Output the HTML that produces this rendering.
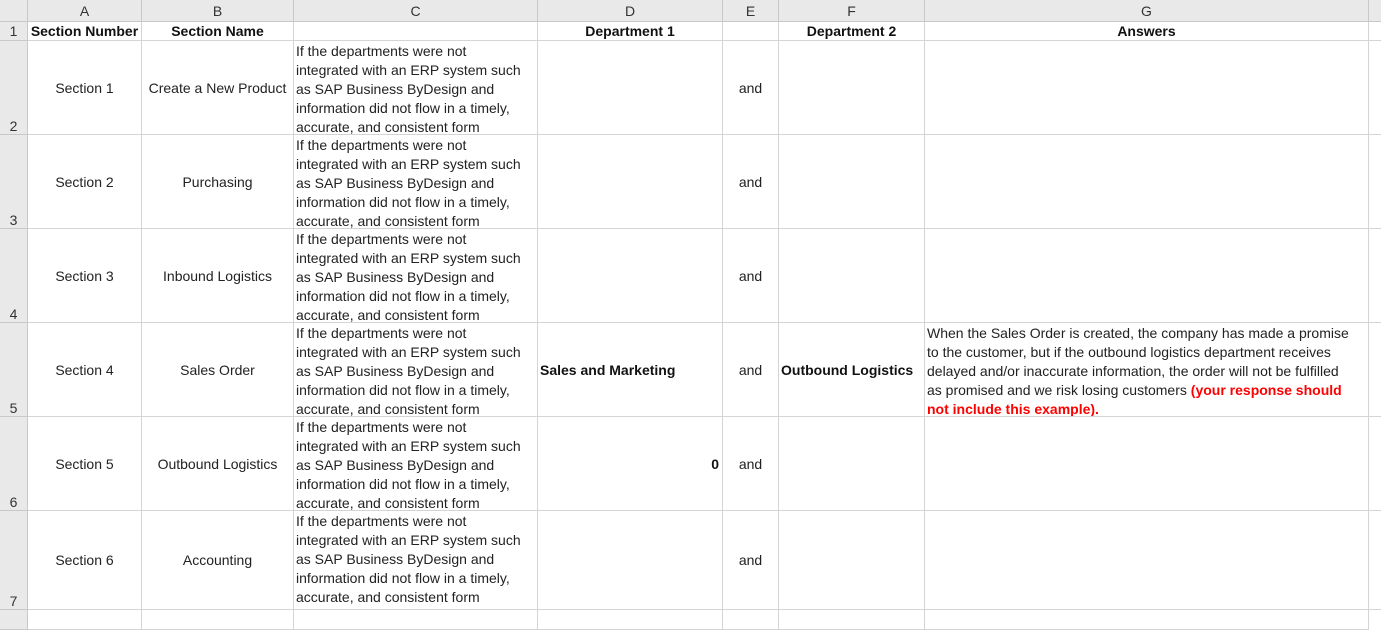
<!DOCTYPE html>
<html><head><meta charset="utf-8"><style>
body{margin:0;width:1381px;height:618px;overflow:hidden;background:#fff;font-family:"Liberation Sans","Noto Sans CJK SC",sans-serif;font-size:14px;color:#222;position:relative}
.c{position:absolute;box-sizing:border-box;border-right:1px solid #d4d4d4;border-bottom:1px solid #d4d4d4;overflow:hidden;display:flex;align-items:center;justify-content:center;white-space:nowrap}
.h{background:#e9e9e9;color:#333;border-color:#c8c8c8}
.rh{background:#e9e9e9;color:#333;border-color:#c8c8c8;align-items:flex-end;justify-content:center;font-size:14px}
.b{font-weight:bold;color:#111}
.w{display:block;line-height:19px;padding:1px 2px 0 2px}
.red{color:#f00;font-weight:bold}
</style></head><body>
<div class="c h" style="left:0;top:0;width:28px;height:22px"></div>
<div class="c h" style="left:28px;top:0;width:114px;height:22px">A</div>
<div class="c h" style="left:142px;top:0;width:152px;height:22px">B</div>
<div class="c h" style="left:294px;top:0;width:244px;height:22px">C</div>
<div class="c h" style="left:538px;top:0;width:185px;height:22px">D</div>
<div class="c h" style="left:723px;top:0;width:56px;height:22px">E</div>
<div class="c h" style="left:779px;top:0;width:146px;height:22px">F</div>
<div class="c h" style="left:925px;top:0;width:444px;height:22px">G</div>
<div class="c h" style="left:1369px;top:0;width:20px;height:22px"></div>

<div class="c rh" style="left:0;top:22px;width:28px;height:19px;align-items:center">1</div>
<div class="c b" style="left:28px;top:22px;width:114px;height:19px">Section Number</div>
<div class="c b" style="left:142px;top:22px;width:152px;height:19px">Section Name</div>
<div class="c" style="left:294px;top:22px;width:244px;height:19px"></div>
<div class="c b" style="left:538px;top:22px;width:185px;height:19px">Department 1</div>
<div class="c" style="left:723px;top:22px;width:56px;height:19px"></div>
<div class="c b" style="left:779px;top:22px;width:146px;height:19px">Department 2</div>
<div class="c b" style="left:925px;top:22px;width:444px;height:19px">Answers</div>
<div class="c" style="left:1369px;top:22px;width:20px;height:19px"></div>

<div class="c rh" style="left:0;top:41px;width:28px;height:94px">2</div>
<div class="c" style="left:28px;top:41px;width:114px;height:94px">Section 1</div>
<div class="c" style="left:142px;top:41px;width:152px;height:94px">Create a New Product</div>
<div class="c w" style="left:294px;top:41px;width:244px;height:94px">If the departments were not<br>integrated with an ERP system such<br>as SAP Business ByDesign and<br>information did not flow in a timely,<br>accurate, and consistent form</div>
<div class="c" style="left:538px;top:41px;width:185px;height:94px"></div>
<div class="c" style="left:723px;top:41px;width:56px;height:94px">and</div>
<div class="c" style="left:779px;top:41px;width:146px;height:94px"></div>
<div class="c" style="left:925px;top:41px;width:444px;height:94px"></div>
<div class="c" style="left:1369px;top:41px;width:20px;height:94px"></div>

<div class="c rh" style="left:0;top:135px;width:28px;height:94px">3</div>
<div class="c" style="left:28px;top:135px;width:114px;height:94px">Section 2</div>
<div class="c" style="left:142px;top:135px;width:152px;height:94px">Purchasing</div>
<div class="c w" style="left:294px;top:135px;width:244px;height:94px">If the departments were not<br>integrated with an ERP system such<br>as SAP Business ByDesign and<br>information did not flow in a timely,<br>accurate, and consistent form</div>
<div class="c" style="left:538px;top:135px;width:185px;height:94px"></div>
<div class="c" style="left:723px;top:135px;width:56px;height:94px">and</div>
<div class="c" style="left:779px;top:135px;width:146px;height:94px"></div>
<div class="c" style="left:925px;top:135px;width:444px;height:94px"></div>
<div class="c" style="left:1369px;top:135px;width:20px;height:94px"></div>

<div class="c rh" style="left:0;top:229px;width:28px;height:94px">4</div>
<div class="c" style="left:28px;top:229px;width:114px;height:94px">Section 3</div>
<div class="c" style="left:142px;top:229px;width:152px;height:94px">Inbound Logistics</div>
<div class="c w" style="left:294px;top:229px;width:244px;height:94px">If the departments were not<br>integrated with an ERP system such<br>as SAP Business ByDesign and<br>information did not flow in a timely,<br>accurate, and consistent form</div>
<div class="c" style="left:538px;top:229px;width:185px;height:94px"></div>
<div class="c" style="left:723px;top:229px;width:56px;height:94px">and</div>
<div class="c" style="left:779px;top:229px;width:146px;height:94px"></div>
<div class="c" style="left:925px;top:229px;width:444px;height:94px"></div>
<div class="c" style="left:1369px;top:229px;width:20px;height:94px"></div>

<div class="c rh" style="left:0;top:323px;width:28px;height:94px">5</div>
<div class="c" style="left:28px;top:323px;width:114px;height:94px">Section 4</div>
<div class="c" style="left:142px;top:323px;width:152px;height:94px">Sales Order</div>
<div class="c w" style="left:294px;top:323px;width:244px;height:94px">If the departments were not<br>integrated with an ERP system such<br>as SAP Business ByDesign and<br>information did not flow in a timely,<br>accurate, and consistent form</div>
<div class="c b" style="left:538px;top:323px;width:185px;height:94px;justify-content:flex-start;padding-left:2px">Sales and Marketing</div>
<div class="c" style="left:723px;top:323px;width:56px;height:94px">and</div>
<div class="c b" style="left:779px;top:323px;width:146px;height:94px;justify-content:flex-start;padding-left:2px">Outbound Logistics</div>
<div class="c w" style="left:925px;top:323px;width:444px;height:94px">When the Sales Order is created, the company has made a promise<br>to the customer, but if the outbound logistics department receives<br>delayed and/or inaccurate information, the order will not be fulfilled<br>as promised and we risk losing customers <span class="red">(your response should<br>not include this example).</span></div>
<div class="c" style="left:1369px;top:323px;width:20px;height:94px"></div>

<div class="c rh" style="left:0;top:417px;width:28px;height:94px">6</div>
<div class="c" style="left:28px;top:417px;width:114px;height:94px">Section 5</div>
<div class="c" style="left:142px;top:417px;width:152px;height:94px">Outbound Logistics</div>
<div class="c w" style="left:294px;top:417px;width:244px;height:94px">If the departments were not<br>integrated with an ERP system such<br>as SAP Business ByDesign and<br>information did not flow in a timely,<br>accurate, and consistent form</div>
<div class="c b" style="left:538px;top:417px;width:185px;height:94px;justify-content:flex-end;padding-right:3px">0</div>
<div class="c" style="left:723px;top:417px;width:56px;height:94px">and</div>
<div class="c" style="left:779px;top:417px;width:146px;height:94px"></div>
<div class="c" style="left:925px;top:417px;width:444px;height:94px"></div>
<div class="c" style="left:1369px;top:417px;width:20px;height:94px"></div>

<div class="c rh" style="left:0;top:511px;width:28px;height:99px">7</div>
<div class="c" style="left:28px;top:511px;width:114px;height:99px">Section 6</div>
<div class="c" style="left:142px;top:511px;width:152px;height:99px">Accounting</div>
<div class="c w" style="left:294px;top:511px;width:244px;height:99px">If the departments were not<br>integrated with an ERP system such<br>as SAP Business ByDesign and<br>information did not flow in a timely,<br>accurate, and consistent form</div>
<div class="c" style="left:538px;top:511px;width:185px;height:99px"></div>
<div class="c" style="left:723px;top:511px;width:56px;height:99px">and</div>
<div class="c" style="left:779px;top:511px;width:146px;height:99px"></div>
<div class="c" style="left:925px;top:511px;width:444px;height:99px"></div>
<div class="c" style="left:1369px;top:511px;width:20px;height:99px"></div>

<div class="c rh" style="left:0;top:610px;width:28px;height:20px"></div>
<div class="c" style="left:28px;top:610px;width:114px;height:20px"></div>
<div class="c" style="left:142px;top:610px;width:152px;height:20px"></div>
<div class="c" style="left:294px;top:610px;width:244px;height:20px"></div>
<div class="c" style="left:538px;top:610px;width:185px;height:20px"></div>
<div class="c" style="left:723px;top:610px;width:56px;height:20px"></div>
<div class="c" style="left:779px;top:610px;width:146px;height:20px"></div>
<div class="c" style="left:925px;top:610px;width:444px;height:20px"></div>
</body></html>
